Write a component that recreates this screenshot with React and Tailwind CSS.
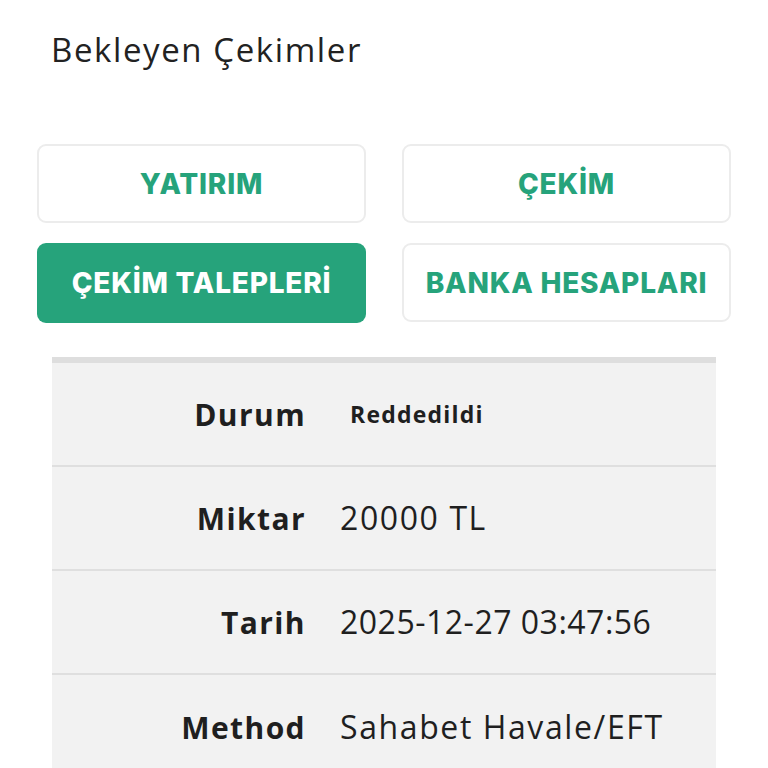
const tabs = [
  { label: 'YATIRIM', active: false },
  { label: 'ÇEKİM', active: false },
  { label: 'ÇEKİM TALEPLERİ', active: true },
  { label: 'BANKA HESAPLARI', active: false },
];

const rows = [
  { label: 'Durum', value: 'Reddedildi', status: true },
  { label: 'Miktar', value: '20000 TL' },
  { label: 'Tarih', value: '2025-12-27 03:47:56', tight: true },
  { label: 'Method', value: 'Sahabet Havale/EFT' },
];

export default function App() {
  return (
    <div className="min-h-screen bg-white font-['Open_Sans',sans-serif] text-[#222]">
      <h1 className="pl-[51px] pt-[30px] text-[33px] font-normal leading-[40px] tracking-[1.6px]">
        Bekleyen Çekimler
      </h1>

      <div className="mt-[74px] grid grid-cols-2 gap-x-[36px] gap-y-[20px] px-[37px] font-['Inter',sans-serif]">
        {tabs.map((t) => (
          <button
            key={t.label}
            className={
              t.active
                ? 'h-[80px] rounded-[9px] bg-[#26a37b] text-[28px] font-extrabold tracking-[0.8px] text-white'
                : 'h-[79px] rounded-[9px] border-2 border-[#ececec] bg-white text-[28px] font-extrabold tracking-[0.8px] text-[#26a37b]'
            }
          >
            {t.label}
          </button>
        ))}
      </div>

      <div className="mx-[52px] mt-[34px] border-t-[6px] border-[#dedede] bg-[#f2f2f2]">
        {rows.map((r, i) => (
          <div
            key={r.label}
            className={`flex h-[104px] items-center ${i < rows.length - 1 ? 'border-b-2 border-[#dfdfdf]' : ''}`}
          >
            <div className="w-[254px] text-right text-[30px] font-bold tracking-[1.4px] text-[#1f1f1f]">{r.label}</div>
            <div
              className={
                r.status
                  ? 'pl-[44px] text-[23px] font-bold tracking-[1.2px] text-[#1f1f1f]'
                  : r.tight
                    ? 'pl-[34px] text-[32px] font-normal tracking-[0.5px] text-[#1f1f1f]'
                    : 'pl-[34px] text-[32px] font-normal tracking-[1.6px] text-[#1f1f1f]'
              }
            >
              {r.value}
            </div>
          </div>
        ))}
      </div>
    </div>
  );
}
